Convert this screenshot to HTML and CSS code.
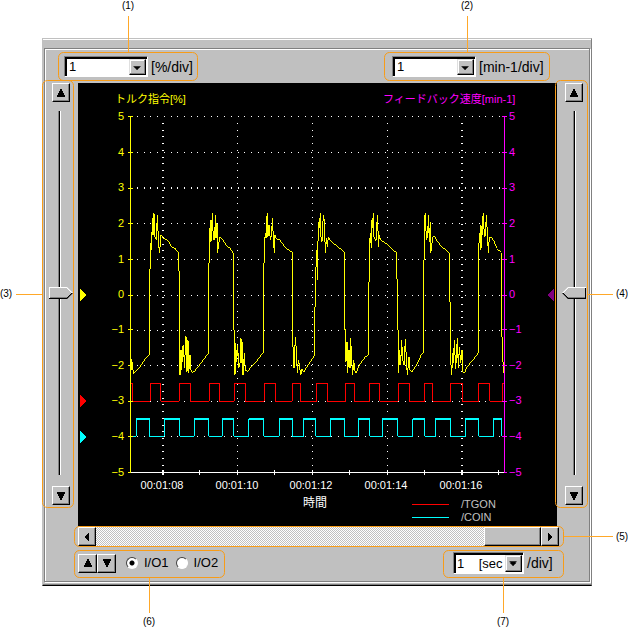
FILE: index.html
```html
<!DOCTYPE html>
<html lang="ja">
<head>
<meta charset="utf-8">
<title>Trace</title>
<link rel="stylesheet" href="styles.css">
</head>
<body>
<main class="figure">
  <section class="window">
    <div class="panel">
      <div class="topbar">
        <div class="field">
          <span class="combo">
            <select id="torque"><option>1</option></select>
            <span class="drop"><svg viewBox="0 0 17 17"><path d="M4 7h8v1h-1v1h-1v1H9v1H7v-1H6V9H5V8H4z"/></svg></span>
          </span>
          <label for="torque">[%/div]</label>
        </div>
        <div class="field field-speed">
          <span class="combo">
            <select id="speed"><option>1</option></select>
            <span class="drop"><svg viewBox="0 0 17 17"><path d="M4 7h8v1h-1v1h-1v1H9v1H7v-1H6V9H5V8H4z"/></svg></span>
          </span>
          <label for="speed">[min-1/div]</label>
        </div>
      </div>

      <div class="side side-left">
        <button class="btn" aria-label="Up"><svg viewBox="0 0 10 10"><path d="M4 1h2v2h1v2h1v2h1v2H1V7h1V5h1V3h1z"/></svg></button>
        <input class="slider" type="range" min="0" max="100" value="50" aria-label="Torque position">
        <button class="btn" aria-label="Down"><svg viewBox="0 0 10 10"><path d="M1 1h8v2H8v2H7v2H6v2H4V7H3V5H2V3H1z"/></svg></button>
      </div>

      <svg class="chart" viewBox="78 83 479 443" role="img" aria-label="Trace">
        <g class="grid">
          <path class="dots" d="M137 116.5H504M137 152.5H504M137 223.5H504M137 259.5H504M137 295.5H504M137 330.5H504M137 365.5H504M137 401.5H504M137 436.5H504M237.5 123V472M312.5 123V472M387.5 123V472"/>
          <path class="dots dots-wide" d="M137 188H504M163 123V472M462 123V472"/>
          <path class="axis-x" d="M131 472.5H504M163 470V475M199.5 470V475M237.5 470V475M274.5 470V475M312.5 470V475M349.5 470V475M387.5 470V475M424.5 470V475M462 470V475M498.5 470V475"/>
          <path class="axis-x axis-strong" d="M163 470V475M462 470V475"/>
        </g>
        <g class="traces" transform="scale(.333333)">
          <polyline class="torque" points="393,1075 394,1110 396,1085 400,1120 406,1115 412,1108 420,1100 430,1085 440,1072 448,1065 449,848 452,730 454,750 455,695 457,705 458,655 460,705 462,640 465,710 469,720 472,645 475,715 478,760 481,730 483,705 490,715 505,722 514,740 525,745 535,758 536,812 538,815 538,990 540,1125 543,1050 545,1110 548,1040 551,1035 553,1105 558,1008 561,1115 564,1020 566,1120 570,1065 572,1110 578,1118 585,1112 595,1100 610,1080 625,1060 626,850 628,730 631,660 633,725 637,638 640,720 644,720 646,645 648,715 651,670 653,758 656,730 660,710 668,718 680,738 690,745 700,760 700,990 703,990 705,1125 707,1030 710,1085 713,1035 716,1105 720,1090 723,1015 726,1090 728,1025 729,1125 733,1060 736,1110 742,1115 750,1105 765,1090 780,1070 790,1058 791,850 793,730 796,700 798,715 799,665 802,640 804,710 807,675 811,720 815,700 817,655 820,710 823,760 825,705 830,718 840,720 850,735 860,747 877,756 877,990 879,1040 882,1105 886,1012 889,1050 892,1120 895,1080 898,1095 902,1125 906,1108 912,1115 920,1102 935,1080 943,1068 946,850 950,750 952,840 955,665 958,685 961,640 963,712 966,725 970,645 973,665 976,758 979,715 982,740 985,712 995,725 1010,738 1033,756 1033,990 1037,990 1038,1085 1041,1025 1043,1120 1047,1050 1050,1105 1052,1015 1055,1080 1058,1125 1061,1080 1064,1110 1068,1120 1075,1102 1085,1085 1095,1072 1105,1065 1107,850 1109,730 1111,700 1114,745 1115,660 1117,685 1120,640 1122,712 1128,722 1130,675 1133,645 1135,740 1138,705 1142,720 1150,725 1165,735 1175,747 1190,758 1193,990 1195,990 1196,1120 1199,1050 1202,1095 1205,1020 1208,1080 1212,1095 1216,1018 1219,1075 1222,1125 1227,1070 1229,1108 1236,1115 1245,1102 1255,1085 1265,1062 1270,1058 1271,850 1274,650 1276,638 1279,720 1283,710 1285,645 1288,725 1291,665 1292,760 1296,730 1298,710 1303,708 1310,722 1325,740 1348,758 1349,815 1351,990 1352,1080 1355,1125 1358,1060 1360,1090 1363,1020 1367,1108 1372,1015 1375,1105 1378,1040 1382,1090 1386,1050 1389,1115 1393,1120 1400,1102 1410,1090 1425,1072 1435,1058 1436,850 1437,730 1439,700 1441,750 1443,675 1445,745 1447,665 1450,638 1453,712 1456,705 1459,645 1462,700 1465,758 1468,712 1475,712 1483,725 1490,745 1504,758 1505,990 1508,1050 1510,1120"/>
          <path class="tgon" d="M392 1150H398V1204H451V1150H482V1204H538V1150H571V1204H628V1150H658V1204H703V1150H736V1204H793V1150H826V1204H877V1150H901V1204H950V1150H982V1204H1038V1150H1063V1204H1109V1150H1139V1204H1195V1150H1228V1204H1274V1150H1299V1204H1352V1150H1387V1204H1436V1150H1469V1204H1508V1150H1512"/>
          <path class="coin" d="M392 1309H409V1257H448V1309H493V1257H539V1309H583V1257H626V1309H667V1257H701V1309H747V1257H791V1309H838V1257H877V1309H911V1257H947V1309H992V1257H1033V1309H1075V1257H1109V1309H1148V1257H1193V1309H1239V1257H1274V1309H1307V1257H1351V1309H1397V1257H1436V1309H1481V1257H1505V1309H1512"/>
          <path class="coin coin-high" d="M408 1257H449M492 1257H540M582 1257H627M666 1257H702M746 1257H792M837 1257H878M910 1257H948M991 1257H1034M1074 1257H1110M1147 1257H1194M1238 1257H1275M1306 1257H1352M1396 1257H1437M1480 1257H1506"/>
        </g>
        <path class="axis-left" d="M130.5 116V473M128 116.5H133M128 152.5H133M128 188H133M128 223.5H133M128 259.5H133M128 295.5H133M128 329.5H133M128 365.5H133M128 401.5H133M128 436.5H133M128 472.5H131"/>
        <path class="axis-right" d="M504.5 116V473M502 116.5H507M502 152.5H507M502 188H507M502 223.5H507M502 259.5H507M502 295.5H507M502 329.5H507M502 365.5H507M502 401.5H507M502 436.5H507M504 472.5H507"/>
        <path class="mark-yellow" d="M80 289L87 295L80 301z"/>
        <path class="mark-red" d="M80 395L87 401L80 407z"/>
        <path class="mark-cyan" d="M80 431L87 437L80 443z"/>
        <path class="mark-purple" d="M554 289L547 295L554 301z"/>
        <g class="text-left">
          <text x="115" y="103">トルク指令[%]</text>
          <g class="scale-left">
            <text x="124" y="120">5</text><text x="124" y="156">4</text><text x="124" y="191">3</text><text x="124" y="227">2</text><text x="124" y="263">1</text><text x="124" y="298">0</text><text x="124" y="333">−1</text><text x="124" y="369">−2</text><text x="124" y="404">−3</text><text x="124" y="440">−4</text><text x="124" y="476">−5</text>
          </g>
        </g>
        <g class="text-right">
          <text x="383" y="103">フィードバック速度[min-1]</text>
          <text x="509" y="120">5</text><text x="509" y="156">4</text><text x="509" y="191">3</text><text x="509" y="227">2</text><text x="509" y="263">1</text><text x="509" y="298">0</text><text x="509" y="333">−1</text><text x="509" y="369">−2</text><text x="509" y="404">−3</text><text x="509" y="440">−4</text><text x="509" y="476">−5</text>
        </g>
        <g class="text-time">
          <text x="162" y="489">00:01:08</text><text x="237" y="489">00:01:10</text><text x="311" y="489">00:01:12</text><text x="386" y="489">00:01:14</text><text x="461" y="489">00:01:16</text>
          <text class="time-title" x="315" y="507">時間</text>
        </g>
        <path class="key-red" d="M412 504.5H449"/>
        <path class="key-cyan" d="M412 517.5H449"/>
        <g class="text-key"><text x="461" y="508">/TGON</text><text x="461" y="521">/COIN</text></g>
      </svg>

      <div class="side side-right">
        <button class="btn" aria-label="Up"><svg viewBox="0 0 10 10"><path d="M4 1h2v2h1v2h1v2h1v2H1V7h1V5h1V3h1z"/></svg></button>
        <input class="slider slider-flip" type="range" min="0" max="100" value="50" aria-label="Speed position">
        <button class="btn" aria-label="Down"><svg viewBox="0 0 10 10"><path d="M1 1h8v2H8v2H7v2H6v2H4V7H3V5H2V3H1z"/></svg></button>
      </div>

      <div class="scroll">
        <button class="btn" aria-label="Left"><svg viewBox="0 0 10 10"><path d="M7 1v8H6V8H5V7H4V6H3V4h1V3h1V2h1V1z"/></svg></button>
        <div class="scroll-track"><div class="scroll-thumb"></div></div>
        <button class="btn" aria-label="Right"><svg viewBox="0 0 10 10"><path d="M3 1v8h1V8h1V7h1V6h1V4H6V3H5V2H4V1z"/></svg></button>
      </div>

      <div class="bottombar">
        <div class="pair">
          <button class="btn btn-wide" aria-label="Previous"><svg viewBox="0 0 10 10"><path d="M4 1h2v2h1v2h1v2h1v2H1V7h1V5h1V3h1z"/></svg></button>
          <button class="btn btn-wide" aria-label="Next"><svg viewBox="0 0 10 10"><path d="M1 1h8v2H8v2H7v2H6v2H4V7H3V5H2V3H1z"/></svg></button>
        </div>
        <div class="radios">
          <label class="radio"><input type="radio" name="io" checked>I/O1</label>
          <label class="radio"><input type="radio" name="io">I/O2</label>
        </div>
        <div class="field field-time">
          <span class="combo combo-small">
            <select id="time"><option>1&nbsp;&nbsp;&nbsp;&nbsp;[sec</option></select>
            <span class="drop"><svg viewBox="0 0 17 17"><path d="M4 6h8v1h-1v2h-1v1H9v1H7v-1H6V9H5V7H4z"/></svg></span>
          </span>
          <label for="time">/div]</label>
        </div>
      </div>
    </div>
  </section>

  <svg class="callouts" viewBox="0 0 628 628">
    <path class="leads" d="M128.5 16V52M467.5 16V52M16 294.5H42M588 294.5H613M563 536.5H613M149.5 578V613M503.5 578V613"/>
    <g class="boxes">
      <rect x="58.500" y="52.500" width="139" height="28" rx="5"/>
      <rect x="384.500" y="52.500" width="165" height="28" rx="5"/>
      <rect x="42.500" y="80.500" width="31" height="427" rx="5"/>
      <rect x="555.500" y="80.500" width="32" height="427" rx="5"/>
      <rect x="74.500" y="526.500" width="489" height="20" rx="5"/>
      <rect x="74.500" y="550.500" width="150" height="27" rx="5"/>
      <rect x="443.500" y="550.500" width="120" height="27" rx="5"/>
    </g>
    <g class="numbers">
      <text x="128" y="9">(1)</text><text x="467" y="9">(2)</text><text x="6" y="297">(3)</text><text x="622" y="297">(4)</text><text x="622" y="540">(5)</text><text x="149" y="625">(6)</text><text x="503" y="625">(7)</text>
    </g>
  </svg>
</main>
</body>
</html>
```
FILE: styles.css
```css
* { box-sizing: border-box; }

body {
  margin: 0;
  background: #fff;
  color: #000;
  font: 13px/16px "Liberation Sans", "Noto Sans CJK JP", sans-serif;
}

.figure {
  position: relative;
  padding: 38px 36px 42px 42px;
}

/* Window frame */
.window {
  padding: 9px 1px 3px;
  background: #c0c0c0;
  border: solid;
  border-width: 1px;
  border-color: #c0c0c0 #808080 #000 #c0c0c0;
  box-shadow: inset 0 1px #fff, inset 0 -1px #808080;
}

.panel {
  display: grid;
  grid-template-columns: 32px 1fr 31px;
  padding: 1px;
  border: 1px solid #808080;
  box-shadow: inset 1px 1px #fff, 1px 1px #fff;
}

.topbar {
  grid-column: 1 / -1;
  display: flex;
  align-items: center;
  height: 33px;
  padding: 0 38px 0 18px;
}

.field {
  display: flex;
  align-items: center;
  gap: 3px;
  font-size: 14px;
}

.field-speed {
  width: 158px;
  margin-left: auto;
}

.combo {
  position: relative;
  width: 84px;
  height: 21px;
  flex: none;
  border: 1px solid;
  border-color: #808080 #fff #fff #808080;
}

.combo select {
  display: block;
  width: 100%;
  height: 100%;
  padding: 0 18px 2px 2px;
  border: solid #000;
  border-width: 2px 0 0 2px;
  border-radius: 0;
  background: #fff;
  color: #000;
  font: 13px/15px "Liberation Sans", sans-serif;
  appearance: none;
}

.combo-small { width: 71px; height: 22px; }
.combo-small select { padding-right: 0; padding-left: 1px; }

.drop {
  position: absolute;
  top: 2px;
  right: 1px;
  bottom: 1px;
  width: 17px;
  background: #c0c0c0;
  border: 1px solid;
  border-color: #dfdfdf #000 #000 #dfdfdf;
  box-shadow: inset -1px -1px #808080, inset 1px 1px #fff;
  pointer-events: none;
}

.drop svg { display: block; width: 15px; height: 15px; }

/* Push buttons */
.btn {
  display: grid;
  place-items: center;
  flex: none;
  width: 18px;
  height: 19px;
  padding: 0;
  background: #c0c0c0;
  border: 1px solid;
  border-color: #fff #000 #000 #fff;
  border-radius: 0;
  box-shadow: inset -1px -1px #808080;
}

.btn svg { width: 10px; height: 10px; }
.btn-wide { width: 19px; }

/* Vertical sliders */
.side {
  display: flex;
  flex-direction: column;
  align-items: center;
  padding-bottom: 21px;
}

.side-left { padding-right: 2px; }
.side-right { padding-left: 3px; }

.slider {
  flex: 1;
  width: 24px;
  min-height: 0;
  margin: 9px 0 11px;
  appearance: none;
  writing-mode: vertical-lr;
  background: linear-gradient(90deg, #808080 1px, #000 1px 2px, #fff 2px) 9px 0 / 3px 100% no-repeat;
}

.slider-flip { background-position: 11px 0; }

.slider::-webkit-slider-thumb {
  appearance: none;
  width: 24px;
  height: 12px;
  background:
    linear-gradient(45deg, transparent 3px, #fff 3px) top right / 6px 6px no-repeat,
    linear-gradient(135deg, transparent 3px, #000 3px) bottom right / 6px 6px no-repeat,
    linear-gradient(#fff, #fff) top left / 18px 1px no-repeat,
    linear-gradient(#fff, #fff) top left / 1px 11px no-repeat,
    linear-gradient(#000, #000) bottom left / 18px 1px no-repeat,
    linear-gradient(0deg, #808080 2px, #c0c0c0 2px);
  clip-path: polygon(0 0, 18px 0, 100% 50%, 18px 100%, 0 100%);
}

.slider-flip::-webkit-slider-thumb {
  background:
    linear-gradient(315deg, transparent 3px, #fff 3px) top left / 6px 6px no-repeat,
    linear-gradient(225deg, transparent 3px, #000 3px) bottom left / 6px 6px no-repeat,
    linear-gradient(#fff, #fff) top right / 18px 1px no-repeat,
    linear-gradient(#000, #000) bottom right / 18px 1px no-repeat,
    linear-gradient(#000, #000) top right / 1px 12px no-repeat,
    linear-gradient(0deg, #808080 2px, #c0c0c0 2px);
  clip-path: polygon(6px 0, 100% 0, 100% 100%, 6px 100%, 0 50%);
}

/* Trace chart */
.chart {
  display: block;
  width: 100%;
  background: #000;
  font-size: 11px;
}

.chart path, .chart polyline { fill: none; shape-rendering: crispEdges; }
.dots { stroke: #fff; stroke-dasharray: 1 5.7; }
.chart .dots-wide { stroke-width: 2; }
.axis-x { stroke: #fff; }
.axis-strong { stroke-width: 2; }
.traces { stroke-width: 3; }
.torque { stroke: #ff0; }
.tgon { stroke: #f00; }
.coin { stroke: #0ff; }
.coin-high { stroke-width: 6; }
.axis-left { stroke: #ff0; }
.axis-right { stroke: #f0f; }
.chart .mark-yellow { fill: #ff0; }
.chart .mark-red { fill: #f00; }
.chart .mark-cyan { fill: #0ff; }
.chart .mark-purple { fill: #800080; }
.key-red { stroke: #f00; }
.key-cyan { stroke: #0ff; }
.text-left { fill: #ff0; }
.scale-left { text-anchor: end; }
.text-right { fill: #f0f; }
.text-time { fill: #fff; text-anchor: middle; }
.time-title { font-size: 12px; }
.text-key { fill: #c0c0c0; }

/* Horizontal scrollbar */
.scroll {
  grid-column: 2;
  display: flex;
  height: 20px;
  margin-right: -2px;
  padding-top: 1px;
}

.scroll-track {
  flex: 1;
  display: flex;
  justify-content: flex-end;
  background: repeating-conic-gradient(#c0c0c0 0 25%, #fff 0 50%) 0 0 / 2px 2px;
}

.scroll-thumb {
  width: 57px;
  background: #c0c0c0;
  border: 1px solid;
  border-color: #fff #000 #000 #fff;
  box-shadow: inset -1px -1px #808080;
}

/* Bottom controls */
.bottombar {
  grid-column: 2;
  display: flex;
  align-items: center;
  height: 34px;
}

.pair { display: flex; }

.radios {
  display: flex;
  gap: 7px;
  margin-left: 10px;
}

.radio {
  display: flex;
  align-items: center;
  gap: 6px;
}

.radio input {
  width: 12px;
  height: 12px;
  margin: 0;
  appearance: none;
  border: 1px solid;
  border-color: #404040 #fff #fff #404040;
  border-radius: 50%;
  background: #fff;
}

.radio input:checked { background: radial-gradient(circle, #000 2px, #fff 3px); }

.field-time {
  width: 104px;
  margin-left: auto;
}

/* Numbered callouts over the window */
.callouts {
  position: absolute;
  top: 0;
  left: 0;
  width: 100%;
  pointer-events: none;
}

.leads { fill: none; stroke: #ffa829; }
.boxes { fill: none; stroke: #f79c18; }
.numbers { font-size: 10px; text-anchor: middle; }
```
